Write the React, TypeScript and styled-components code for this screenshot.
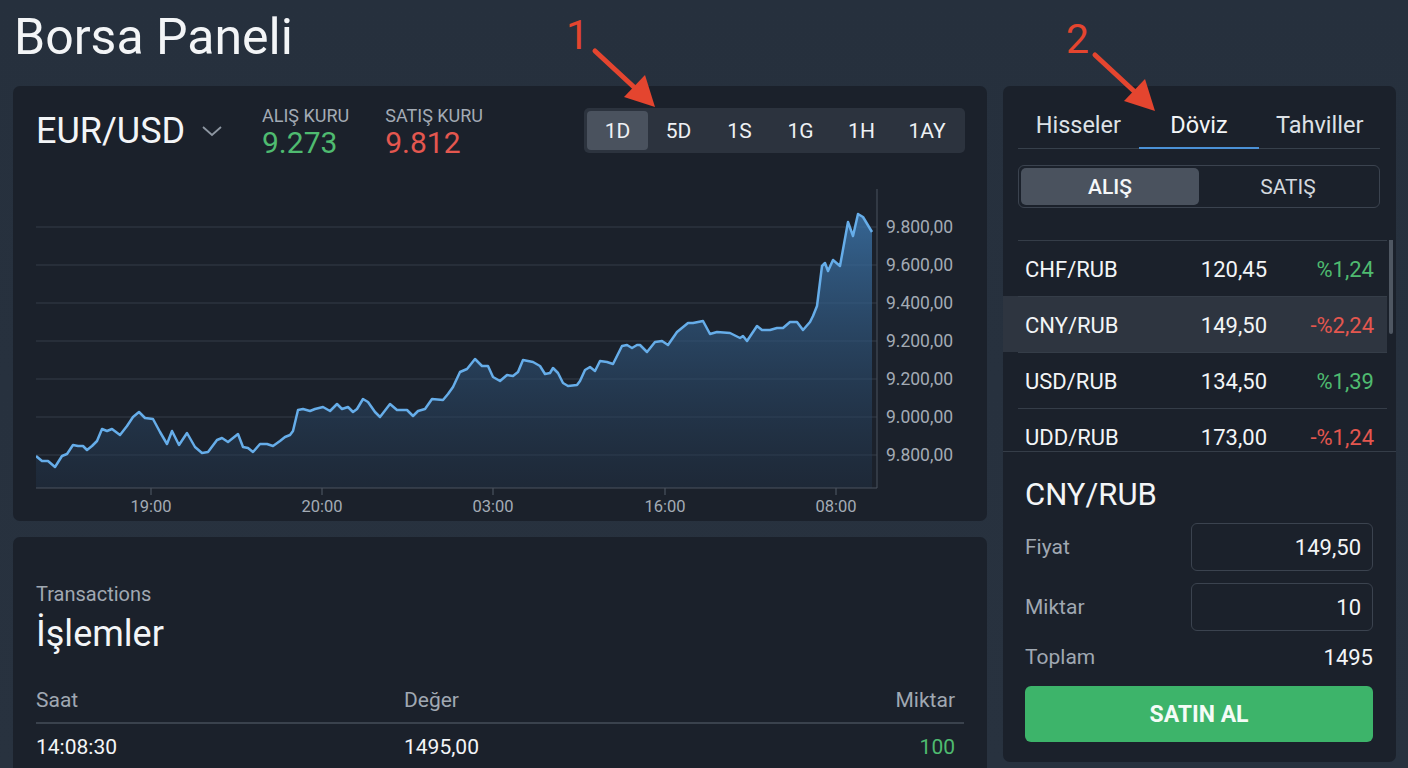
import React, { useState } from 'react';
import styled, { createGlobalStyle } from 'styled-components';

const GlobalStyle = createGlobalStyle`
  html, body {
    margin: 0;
    padding: 0;
    background: #27313e;
    font-family: Roboto, "Liberation Sans", sans-serif;
    color: #eef1f4;
  }
  * { box-sizing: border-box; }
`;

const Page = styled.div`
  position: relative;
  width: 1408px;
  height: 768px;
  overflow: hidden;
  padding: 0 12px 0 13px;
  background: linear-gradient(180deg, #26303d 0%, #28323f 100%);
`;

const Title = styled.h1`
  margin: 0;
  height: 86px;
  padding-top: 8px;
  padding-left: 1px;
  font-size: 50px;
  font-weight: 400;
  line-height: 58px;
  color: #f3f5f7;
`;

const Layout = styled.div`
  display: grid;
  grid-template-columns: 974px 393px;
  gap: 16px;
  align-items: start;
`;

const LeftColumn = styled.div`
  display: flex;
  flex-direction: column;
  gap: 16px;
`;

const Card = styled.div`
  background: #1b212b;
  border-radius: 7px;
`;

const ChartCard = styled(Card)`
  height: 435px;
  padding: 22px 22px 0 23px;
  display: flex;
  flex-direction: column;
`;

const ChartHeader = styled.div`
  display: flex;
  align-items: center;
  height: 45px;
`;

const PairSelect = styled.div`
  display: flex;
  align-items: center;
  gap: 16px;
  font-size: 36px;
  color: #f3f5f7;
  width: 226px;
`;

const Rate = styled.div`
  display: flex;
  flex-direction: column;
  margin-right: 36px;
  margin-top: 4px;
`;

const RateLabel = styled.span`
  font-size: 18px;
  color: #a3abb5;
  line-height: 20px;
`;

const RateValue = styled.span<{ $tone: 'up' | 'down' }>`
  font-size: 30px;
  line-height: 33px;
  color: ${({ $tone }) => ($tone === 'up' ? '#4fbb70' : '#e4574f')};
`;

const RangeGroup = styled.div`
  margin-left: auto;
  display: flex;
  background: #2c333e;
  border-radius: 5px;
  padding: 3px;
  height: 45px;
`;

const RangeButton = styled.button<{ $active?: boolean; $wide?: boolean }>`
  border: none;
  background: ${({ $active }) => ($active ? '#4a525e' : 'transparent')};
  color: #eef1f4;
  font-family: inherit;
  font-size: 21px;
  width: ${({ $wide }) => ($wide ? '70px' : '61px')};
  border-radius: 4px;
  cursor: pointer;
  padding: 0;
`;

const ChartSvg = styled.svg`
  display: block;
  margin-top: 17px;
`;

const TxCard = styled(Card)`
  height: 260px;
  padding: 45px 23px 0 23px;
`;

const TxCaption = styled.div`
  font-size: 20px;
  color: #a0a8b2;
  line-height: 24px;
`;

const TxTitle = styled.div`
  font-size: 36px;
  color: #f3f5f7;
  line-height: 44px;
  margin-top: 6px;
`;

const TxGrid = styled.div`
  display: grid;
  grid-template-columns: 368px 1fr 120px;
  margin-top: 32px;
`;

const TxHead = styled.div<{ $right?: boolean }>`
  font-size: 21px;
  color: #a0a8b2;
  padding-bottom: 10px;
  border-bottom: 2px solid #3a424d;
  text-align: ${({ $right }) => ($right ? 'right' : 'left')};
  padding-right: 9px;
`;

const TxCell = styled.div<{ $right?: boolean; $green?: boolean }>`
  font-size: 21px;
  padding: 11px 9px 10px 0;
  color: ${({ $green }) => ($green ? '#4fbb70' : '#f3f5f7')};
  text-align: ${({ $right }) => ($right ? 'right' : 'left')};
  border-bottom: 1px solid #333b46;
`;

const SidePanel = styled(Card)`
  height: 676px;
  padding: 0 16px 20px 15px;
  display: flex;
  flex-direction: column;
`;

const Tabs = styled.div`
  display: flex;
  border-bottom: 1px solid #37404b;
  margin-top: 23px;
`;

const Tab = styled.div<{ $active?: boolean }>`
  flex: 1;
  text-align: center;
  font-size: 23.5px;
  color: ${({ $active }) => ($active ? '#f3f5f7' : '#dde1e6')};
  padding: 2px 0 8px;
  margin-bottom: -1px;
  border-bottom: 2px solid ${({ $active }) => ($active ? '#4b91d6' : 'transparent')};
`;

const Segmented = styled.div`
  display: flex;
  margin-top: 16px;
  height: 44px;
  border: 1px solid #3b434f;
  border-radius: 6px;
  padding: 2px;
`;

const Segment = styled.div<{ $active?: boolean }>`
  flex: 1;
  display: flex;
  align-items: center;
  justify-content: center;
  border-radius: 5px;
  font-size: 21px;
  font-weight: ${({ $active }) => ($active ? 500 : 400)};
  background: ${({ $active }) => ($active ? '#4a525e' : 'transparent')};
  color: ${({ $active }) => ($active ? '#f5f7f9' : '#d3d8de')};
`;

const ListViewport = styled.div`
  position: relative;
  margin: 32px -16px 0 -15px;
  height: 215px;
  overflow: hidden;
  border-bottom: 1px solid #353d48;
  padding-right: 9px;
`;

const ScrollThumb = styled.div`
  position: absolute;
  right: 3px;
  top: -13px;
  width: 4px;
  height: 107px;
  border-radius: 2px;
  background: #4f5762;
`;

const PairRow = styled.div<{ $selected?: boolean }>`
  position: relative;
  display: grid;
  grid-template-columns: 1fr 110px 107px;
  align-items: center;
  height: 56px;
  padding: 2px 13px 0 22px;
  font-size: 22px;
  background: ${({ $selected }) => ($selected ? '#2e3540' : 'transparent')};
  &::before {
    content: '';
    position: absolute;
    left: 15px;
    right: 0;
    top: 0;
    border-top: 1px solid #353d48;
  }
`;

const PairName = styled.span`
  color: #f3f5f7;
`;

const PairPrice = styled.span`
  color: #f3f5f7;
  text-align: right;
`;

const PairChange = styled.span<{ $up: boolean }>`
  text-align: right;
  color: ${({ $up }) => ($up ? '#4fbb70' : '#e4574f')};
`;

const TradeSection = styled.div`
  display: flex;
  flex-direction: column;
  padding: 0 7px;
`;

const TradeTitle = styled.div`
  font-size: 31px;
  color: #f3f5f7;
  margin: 25px 0 10px;
  line-height: 36px;
`;

const FormRow = styled.div`
  display: flex;
  align-items: center;
  justify-content: space-between;
  margin-bottom: 12px;
`;

const FieldLabel = styled.span`
  font-size: 21px;
  color: #a0a8b2;
`;

const FieldInput = styled.div`
  width: 182px;
  height: 48px;
  border: 1px solid #3b434f;
  border-radius: 6px;
  display: flex;
  align-items: center;
  justify-content: flex-end;
  padding-right: 11px;
  font-size: 22px;
  color: #f3f5f7;
`;

const TotalRow = styled.div`
  display: flex;
  justify-content: space-between;
  align-items: center;
  margin-top: 1px;
  height: 26px;
`;

const TotalValue = styled.span`
  font-size: 22px;
  color: #f3f5f7;
`;

const BuyButton = styled.button`
  margin-top: 16px;
  height: 56px;
  border: none;
  border-radius: 6px;
  background: #3db46a;
  color: #f4fbf6;
  font-family: inherit;
  font-size: 23px;
  font-weight: 700;
  cursor: pointer;
`;

const Annotation = styled.div<{ $x: number; $y: number }>`
  position: absolute;
  left: ${({ $x }) => $x}px;
  top: ${({ $y }) => $y}px;
  pointer-events: none;
`;

const AnnotationNumber = styled.span`
  position: absolute;
  left: 0;
  top: 0;
  font-size: 41px;
  line-height: 44px;
  color: #e4452f;
`;

const ranges = ['1D', '5D', '1S', '1G', '1H', '1AY'];

const pairs = [
  { name: 'CHF/RUB', price: '120,45', change: '%1,24', up: true },
  { name: 'CNY/RUB', price: '149,50', change: '-%2,24', up: false },
  { name: 'USD/RUB', price: '134,50', change: '%1,39', up: true },
  { name: 'UDD/RUB', price: '173,00', change: '-%1,24', up: false },
];

const points: [number, number][] = [
  [36, 457], [42, 462], [48, 462], [55, 468], [62, 457], [67, 455], [73, 446], [78, 447],
  [83, 447], [87, 451], [92, 447], [97, 442], [102, 430], [107, 432], [112, 430], [120, 436],
  [127, 427], [133, 418], [139, 413], [145, 419], [153, 420], [160, 433], [167, 445], [172, 432],
  [179, 446], [187, 434], [195, 448], [202, 454], [208, 453], [217, 441], [222, 439], [228, 443],
  [238, 435], [243, 448], [248, 449], [253, 453], [260, 445], [267, 445], [273, 447], [280, 442],
  [285, 438], [290, 436], [293, 432], [298, 411], [303, 410], [310, 412], [315, 410], [323, 408],
  [330, 412], [337, 405], [342, 410], [348, 408], [353, 413], [357, 410], [363, 400], [368, 403],
  [375, 413], [380, 418], [390, 405], [397, 411], [407, 411], [413, 417], [418, 412], [425, 410],
  [432, 400], [443, 401], [448, 395], [453, 388], [460, 373], [467, 370], [475, 360], [482, 367],
  [488, 367], [493, 378], [500, 382], [507, 376], [513, 377], [518, 373], [523, 361], [533, 363],
  [540, 367], [545, 375], [550, 374], [553, 369], [558, 374], [563, 384], [568, 387], [577, 386],
  [580, 382], [585, 371], [590, 368], [595, 372], [600, 362], [607, 363], [613, 365], [622, 347],
  [627, 346], [632, 349], [637, 346], [640, 346], [647, 353], [655, 343], [662, 342], [668, 346],
  [677, 333], [688, 324], [693, 324], [703, 322], [710, 335], [717, 333], [730, 334], [740, 339],
  [743, 337], [747, 342], [757, 327], [762, 331], [770, 331], [777, 329], [783, 329], [790, 323],
  [797, 323], [803, 331], [810, 323], [813, 317], [817, 307], [822, 267], [825, 264], [828, 272],
  [833, 261], [840, 267], [848, 223], [853, 237], [858, 215], [863, 218], [872, 233],
];

const gridY = [228, 266, 304, 342, 380, 418, 456];
const yLabels = ['9.800,00', '9.600,00', '9.400,00', '9.200,00', '9.200,00', '9.000,00', '9.800,00'];
const xLabels = [
  { x: 151, t: '19:00' },
  { x: 322, t: '20:00' },
  { x: 493, t: '03:00' },
  { x: 665, t: '16:00' },
  { x: 836, t: '08:00' },
];

function PriceChart() {
  const line = points.map(([x, y], i) => `${i ? 'L' : 'M'}${x} ${y}`).join(' ');
  const area = `${line} L872 489 L36 489 Z`;
  return (
    <ChartSvg width={929} height={345} viewBox="36 171 929 345">
      <defs>
        <linearGradient id="fill" x1="0" y1="0" x2="0" y2="1">
          <stop offset="0%" stopColor="#3c76ad" stopOpacity="0.8" />
          <stop offset="100%" stopColor="#22344a" stopOpacity="0.4" />
        </linearGradient>
      </defs>
      {gridY.map((y) => (
        <line key={y} x1={36} x2={877} y1={y} y2={y} stroke="#343d49" strokeWidth={1} />
      ))}
      <path d={area} fill="url(#fill)" />
      <path d={line} fill="none" stroke="#66ade9" strokeWidth={2.5} strokeLinejoin="round" />
      <line x1={877} x2={877} y1={190} y2={489} stroke="#434b57" strokeWidth={1.2} />
      <line x1={36} x2={877} y1={489} y2={489} stroke="#4a525e" strokeWidth={1.2} />
      {gridY.map((y, i) => (
        <text key={i} x={886} y={y + 6} fontSize={17.5} fill="#a3abb5" fontFamily="Roboto, sans-serif">
          {yLabels[i]}
        </text>
      ))}
      {xLabels.map((l) => (
        <g key={l.t}>
          <line x1={l.x} x2={l.x} y1={489} y2={496} stroke="#4a525e" strokeWidth={1.2} />
          <text x={l.x} y={513} fontSize={16.5} fill="#a3abb5" textAnchor="middle" fontFamily="Roboto, sans-serif">
            {l.t}
          </text>
        </g>
      ))}
    </ChartSvg>
  );
}

function ArrowMark({ label, x, y }: { label: string; x: number; y: number }) {
  return (
    <Annotation $x={x} $y={y}>
      <AnnotationNumber>{label}</AnnotationNumber>
      <svg width={100} height={100} style={{ position: 'absolute', left: 0, top: 0 }}>
        <line x1={29} y1={38} x2={70} y2={76} stroke="#e4452f" strokeWidth={5} strokeLinecap="round" />
        <polygon points="89,94 58,84 79,62" fill="#e4452f" />
      </svg>
    </Annotation>
  );
}

export default function App() {
  const [range, setRange] = useState('1D');
  const [side, setSide] = useState<'buy' | 'sell'>('buy');
  return (
    <Page>
      <GlobalStyle />
      <Title>Borsa Paneli</Title>
      <Layout>
        <LeftColumn>
          <ChartCard>
            <ChartHeader>
              <PairSelect>
                EUR/USD
                <svg width={22} height={14} viewBox="0 0 22 14">
                  <path d="M2 3 L11 11 L20 3" fill="none" stroke="#8d96a1" strokeWidth={1.8} />
                </svg>
              </PairSelect>
              <Rate>
                <RateLabel>ALIŞ KURU</RateLabel>
                <RateValue $tone="up">9.273</RateValue>
              </Rate>
              <Rate>
                <RateLabel>SATIŞ KURU</RateLabel>
                <RateValue $tone="down">9.812</RateValue>
              </Rate>
              <RangeGroup>
                {ranges.map((r) => (
                  <RangeButton key={r} $active={r === range} $wide={r === '1AY'} onClick={() => setRange(r)}>
                    {r}
                  </RangeButton>
                ))}
              </RangeGroup>
            </ChartHeader>
            <PriceChart />
          </ChartCard>

          <TxCard>
            <TxCaption>Transactions</TxCaption>
            <TxTitle>İşlemler</TxTitle>
            <TxGrid>
              <TxHead>Saat</TxHead>
              <TxHead>Değer</TxHead>
              <TxHead $right>Miktar</TxHead>
              <TxCell>14:08:30</TxCell>
              <TxCell>1495,00</TxCell>
              <TxCell $right $green>100</TxCell>
            </TxGrid>
          </TxCard>
        </LeftColumn>

        <SidePanel>
          <Tabs>
            <Tab>Hisseler</Tab>
            <Tab $active>Döviz</Tab>
            <Tab>Tahviller</Tab>
          </Tabs>
          <Segmented>
            <Segment $active={side === 'buy'} onClick={() => setSide('buy')}>ALIŞ</Segment>
            <Segment $active={side === 'sell'} onClick={() => setSide('sell')}>SATIŞ</Segment>
          </Segmented>
          <ListViewport>
            {pairs.map((p, i) => (
              <PairRow key={p.name} $selected={i === 1}>
                <PairName>{p.name}</PairName>
                <PairPrice>{p.price}</PairPrice>
                <PairChange $up={p.up}>{p.change}</PairChange>
              </PairRow>
            ))}
            <ScrollThumb />
          </ListViewport>
          <TradeSection>
            <TradeTitle>CNY/RUB</TradeTitle>
            <FormRow>
              <FieldLabel>Fiyat</FieldLabel>
              <FieldInput>149,50</FieldInput>
            </FormRow>
            <FormRow>
              <FieldLabel>Miktar</FieldLabel>
              <FieldInput>10</FieldInput>
            </FormRow>
            <TotalRow>
              <FieldLabel>Toplam</FieldLabel>
              <TotalValue>1495</TotalValue>
            </TotalRow>
            <BuyButton>SATIN AL</BuyButton>
          </TradeSection>
        </SidePanel>
      </Layout>

      <ArrowMark label="1" x={566} y={13} />
      <ArrowMark label="2" x={1066} y={17} />
    </Page>
  );
}
